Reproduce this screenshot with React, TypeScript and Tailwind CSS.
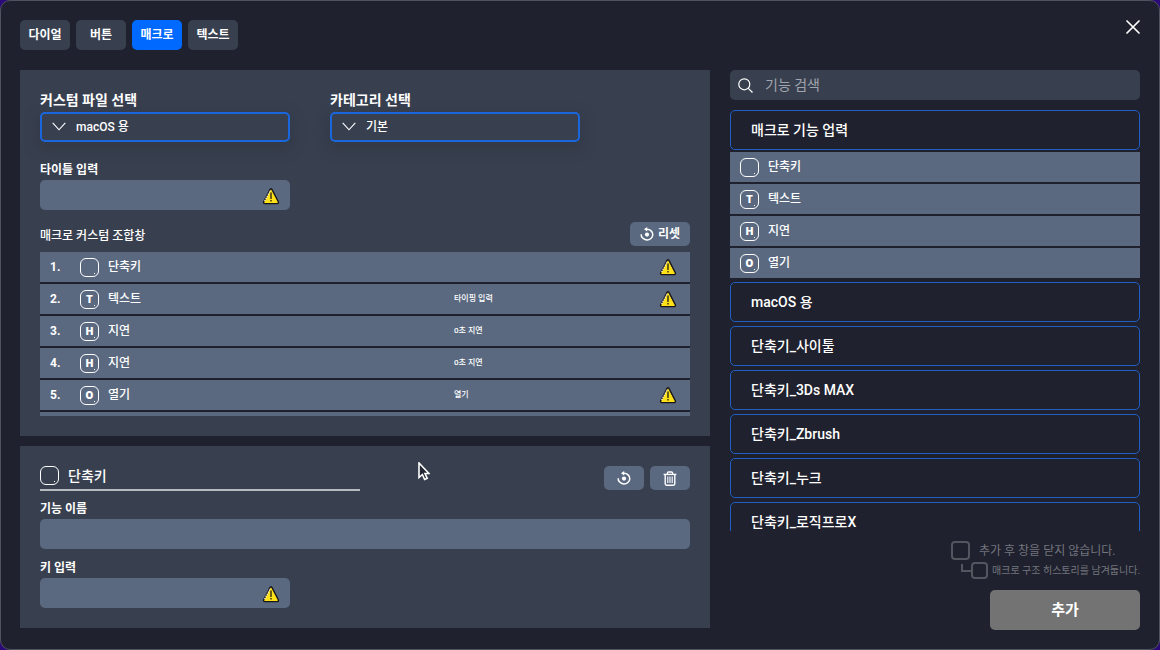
import { useState } from "react";
import type { ReactNode } from "react";

const steps = [
  { letter: "", name: "단축키", detail: "", warn: true },
  { letter: "T", name: "텍스트", detail: "타이핑 입력", warn: true },
  { letter: "H", name: "지연", detail: "0초 지연", warn: false },
  { letter: "H", name: "지연", detail: "0초 지연", warn: false },
  { letter: "O", name: "열기", detail: "열기", warn: true },
  { letter: "", name: "", detail: "", warn: false },
];

const actions = [
  { letter: "", name: "단축키" },
  { letter: "T", name: "텍스트" },
  { letter: "H", name: "지연" },
  { letter: "O", name: "열기" },
];

const groups = ["macOS 용", "단축기_사이툴", "단축키_3Ds MAX", "단축키_Zbrush", "단축키_누크", "단축키_로직프로X"];

const tabs = ["다이얼", "버튼", "매크로", "텍스트"];

function KeyCap({ letter }: { letter: string }) {
  return (
    <span className="relative flex size-[19px] shrink-0 items-center justify-center rounded-[6px] border border-white font-['Inter',sans-serif] text-[10px] leading-none font-black text-white">
      {letter}
      <span className="absolute right-[3px] bottom-[2px] size-px bg-white" />
    </span>
  );
}

function Warning() {
  return (
    <svg width="18" height="18" viewBox="0 0 18 18" aria-hidden="true">
      <path d="M8.1 2.4Q9 1 9.9 2.4L16.3 14.8Q16.9 16.6 15.2 16.6H2.8Q1.1 16.6 1.7 14.8Z" fill="#ffe11a" stroke="#17171c" strokeWidth="1.4" strokeLinejoin="round" />
      <path d="M2.6 14 8.4 3.2" stroke="#fff" strokeWidth="1.2" strokeDasharray="1.2 1.2" />
      <path d="M9 5.6v6.4M9 13v1.6" stroke="#3a3410" strokeWidth="1.5" />
    </svg>
  );
}

function ResetIcon() {
  return (
    <svg width="14" height="14" viewBox="0 0 14 14" fill="none" aria-hidden="true">
      <path d="M1.2 7.2A5.8 5.3 0 1 0 7 2.3H5.8" stroke="#fff" strokeWidth="1.5" />
      <path d="M7.2 0v4.6L4 2.3Z" fill="#fff" />
      <circle cx="7" cy="7.6" r="2.1" fill="#fff" />
    </svg>
  );
}

function TrashIcon() {
  return (
    <svg width="14" height="15" viewBox="0 0 14 15" fill="none" stroke="#fff" aria-hidden="true">
      <path d="M.6 3.4h12.8" strokeWidth="1.4" />
      <path d="M4.4 3.2V2Q4.4 1 5.4 1h3.2q1 0 1 1v1.2" strokeWidth="1.3" />
      <path d="M2.2 3.6v9.2q0 1.4 1.4 1.4h6.8q1.4 0 1.4-1.4V3.6" strokeWidth="1.4" />
      <path d="M4.8 5.6v6.4M7 5.6v6.4M9.2 5.6v6.4" strokeWidth="1.1" />
    </svg>
  );
}

function SelectField({ id, label, value }: { id: string; label: string; value: string }) {
  return (
    <div className="flex w-[250px] flex-col gap-0.5">
      <label htmlFor={id} className="text-sm leading-5 font-bold">
        {label}
      </label>
      <div className="relative">
        <select
          id={id}
          defaultValue={value}
          className="block h-[30px] w-full appearance-none rounded-[5px] border-2 border-[#1a66dc] bg-[#384050] pl-[34px] text-xs font-medium text-white shadow-[0_5px_12px_4px_rgba(45,48,58,0.4)] outline-none"
        >
          <option>{value}</option>
        </select>
        <svg className="pointer-events-none absolute top-2.5 left-3" width="14" height="9" viewBox="0 0 14 9" fill="none" stroke="#fff" strokeWidth="1.1" aria-hidden="true">
          <path d="m.7.8 6.3 7 6.3-7" />
        </svg>
      </div>
    </div>
  );
}

function TextField({ id, label, width, warn }: { id: string; label: string; width: string; warn?: boolean }) {
  return (
    <div className={width}>
      <label htmlFor={id} className="block text-xs leading-5 font-bold">
        {label}
      </label>
      <div className="relative">
        <input id={id} type="text" className="block h-[30px] w-full rounded-[5px] bg-[#5a6980] px-3 text-xs text-white outline-none" />
        {warn && (
          <span className="pointer-events-none absolute top-[7px] right-2.5">
            <Warning />
          </span>
        )}
      </div>
    </div>
  );
}

function SmallButton({ children, label }: { children: ReactNode; label?: string }) {
  return (
    <button type="button" aria-label={label} className="flex h-6 min-w-10 items-center justify-center gap-1 rounded-[5px] bg-[#5a6980] px-2.5 text-xs font-bold">
      {children}
    </button>
  );
}

export default function App() {
  const [tab, setTab] = useState("매크로");

  return (
    <div className="h-screen min-h-[650px] bg-[#2b0a78] font-['Roboto','Noto_Sans_CJK_KR',sans-serif] text-white">
      <div role="dialog" aria-label="매크로" className="flex h-full flex-col gap-5 rounded-[10px] border border-[#50535f] bg-[#1f212e] p-[19px]">
        <header className="flex items-start justify-between">
          <nav className="flex gap-1.5">
            {tabs.map((name) => (
              <button
                key={name}
                type="button"
                onClick={() => setTab(name)}
                className={
                  name === tab
                    ? "h-[30px] w-[50px] rounded-[5px] bg-[#0069ff] text-xs font-bold"
                    : "h-[30px] w-[50px] rounded-[5px] bg-[#384050] text-xs font-bold"
                }
              >
                {name}
              </button>
            ))}
          </nav>
          <button type="button" aria-label="닫기" className="flex size-[14px]">
            <svg width="14" height="14" viewBox="0 0 14 14" stroke="#fff" strokeWidth="1.7" strokeLinecap="round" aria-hidden="true">
              <path d="m1 1 12 12M13 1 1 13" />
            </svg>
          </button>
        </header>

        <main className="grid min-h-0 flex-1 grid-cols-[minmax(0,1fr)_410px] grid-rows-[minmax(0,1fr)] gap-5">
          <div className="flex min-h-0 flex-col gap-2.5 pb-0.5">
            <section className="flex min-h-0 flex-1 flex-col bg-[#384050] p-5">
              <div className="flex gap-10">
                <SelectField id="file" label="커스텀 파일 선택" value="macOS 용" />
                <SelectField id="category" label="카테고리 선택" value="기본" />
              </div>
              <div className="mt-[18px]">
                <TextField id="title" label="타이틀 입력" width="w-[250px]" warn />
              </div>
              <div className="mt-3 mb-1.5 flex items-center justify-between">
                <h2 className="pt-1 text-xs font-medium">매크로 커스텀 조합창</h2>
                <SmallButton>
                  <ResetIcon />
                  리셋
                </SmallButton>
              </div>
              <ol className="flex min-h-0 flex-1 flex-col gap-0.5 overflow-hidden bg-[#1f212e]">
                {steps.map((step, i) => (
                  <li key={i} className="grid h-[30px] shrink-0 grid-cols-[30px_minmax(0,1fr)_205px_31px] items-center bg-[#5a6980] pl-2.5">
                    {step.name && (
                      <>
                        <span className="text-xs font-bold">{i + 1}.</span>
                        <span className="flex items-center gap-[9px] text-xs font-medium">
                          <KeyCap letter={step.letter} />
                          {step.name}
                        </span>
                        <span className="text-[8px] font-medium">{step.detail}</span>
                        {step.warn && <Warning />}
                      </>
                    )}
                  </li>
                ))}
              </ol>
            </section>

            <section className="bg-[#384050] p-5">
              <div className="flex items-start justify-between">
                <h2 className="flex h-[25px] w-80 items-start gap-[9px] border-b-2 border-[#b6b9c0] text-sm leading-5 font-medium">
                  <KeyCap letter="" />
                  단축키
                </h2>
                <div className="flex gap-1.5">
                  <SmallButton label="초기화">
                    <ResetIcon />
                  </SmallButton>
                  <SmallButton label="삭제">
                    <TrashIcon />
                  </SmallButton>
                </div>
              </div>
              <div className="mt-2 flex flex-col gap-[9px]">
                <TextField id="name" label="기능 이름" width="w-full" />
                <TextField id="key" label="키 입력" width="w-[250px]" warn />
              </div>
            </section>
          </div>

          <aside className="flex min-h-0 flex-col">
            <label className="flex h-[30px] shrink-0 items-center gap-3 rounded-[5px] bg-[#384050] pl-2">
              <svg width="15" height="15" viewBox="0 0 15 15" fill="none" stroke="#fff" strokeWidth="1.2" aria-hidden="true">
                <circle cx="6.3" cy="6.3" r="5.5" />
                <path d="m10.3 10.3 4.2 4.2" />
              </svg>
              <input type="search" aria-label="기능 검색" placeholder="기능 검색" className="min-w-0 flex-1 bg-transparent text-sm outline-none placeholder:text-[#a0a4ac]" />
            </label>

            <div className="mt-2.5 flex min-h-0 flex-1 flex-col gap-1 overflow-hidden">
              <div className="flex shrink-0 flex-col gap-0.5">
                <button type="button" className="h-10 rounded-[5px] border border-[#1f5fc4] px-5 text-left text-sm font-medium">
                  매크로 기능 업력
                </button>
                {actions.map((action) => (
                  <button key={action.name} type="button" className="flex h-[30px] items-center gap-[9px] bg-[#5a6980] px-2.5 text-xs font-medium">
                    <KeyCap letter={action.letter} />
                    {action.name}
                  </button>
                ))}
              </div>
              {groups.map((name) => (
                <button key={name} type="button" className="h-10 shrink-0 rounded-[5px] border border-[#1f5fc4] px-5 text-left text-sm font-medium">
                  {name}
                </button>
              ))}
            </div>

            <div className="mt-2.5 flex w-[189px] flex-col self-end text-[#73757d]">
              <label className="flex h-[19px] items-center gap-[9px] text-xs whitespace-nowrap">
                <input type="checkbox" className="size-[19px] shrink-0 appearance-none rounded-[4px] border-2 border-[#54565f] checked:bg-[#54565f]" />
                추가 후 창을 닫지 않습니다.
              </label>
              <label className="flex h-5 items-center gap-1 pl-2.5 text-[10px] whitespace-nowrap">
                <span className="flex items-center">
                  <span className="mb-1 h-2 w-2.5 border-b-2 border-l-2 border-[#54565f]" />
                  <input type="checkbox" className="size-[17px] shrink-0 appearance-none rounded-[4px] border-2 border-[#54565f] checked:bg-[#54565f]" />
                </span>
                매크로 구조 히스토리를 남겨둡니다.
              </label>
            </div>
            <button type="button" className="mt-2.5 h-10 w-[150px] shrink-0 self-end rounded-[5px] bg-[#737373] text-[15px] font-bold">
              추가
            </button>
          </aside>
        </main>
      </div>

      <svg className="pointer-events-none absolute top-[462px] left-[418px]" width="12" height="19" viewBox="0 0 12 19" aria-hidden="true">
        <path d="M1 1v14.5l3.4-3 2.2 5 2.6-1.2-2.2-4.8H11Z" fill="#222733" stroke="#fff" strokeWidth="1.6" />
      </svg>
    </div>
  );
}
